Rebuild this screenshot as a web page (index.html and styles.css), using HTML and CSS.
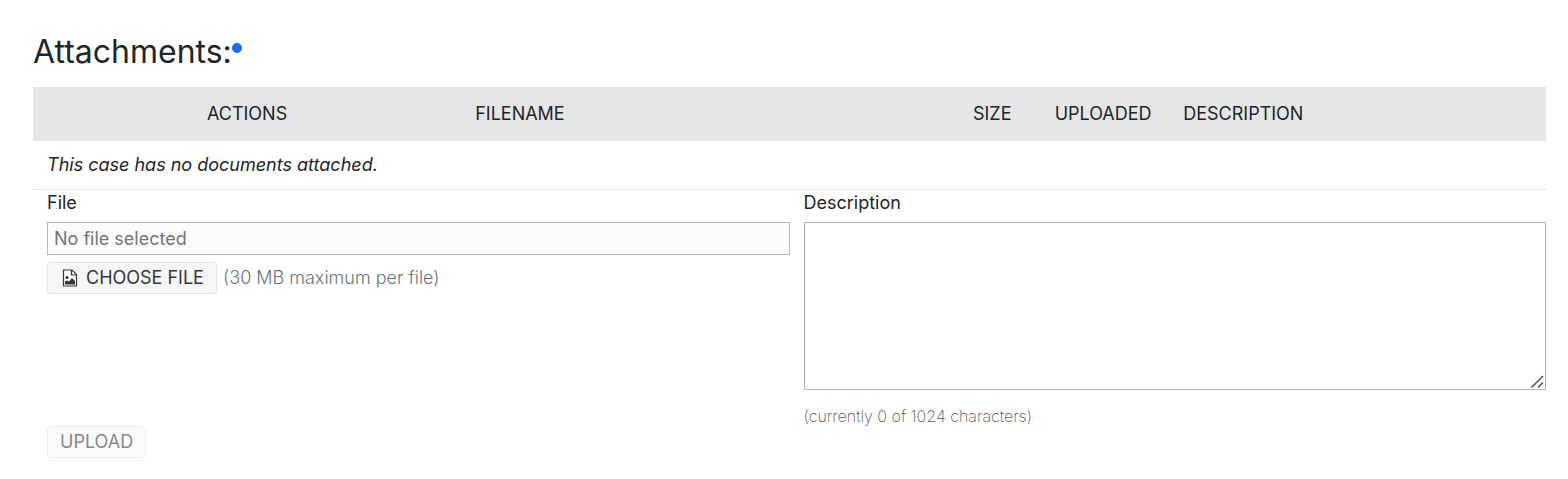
FILE: index.html
```html
<!DOCTYPE html>
<html lang="en">
<head>
  <meta charset="UTF-8">
  <title>Attachments</title>
  <link rel="stylesheet" href="styles.css">
</head>
<body>
  <div class="attachments">
    <h2 class="title">Attachments:<span class="dot"></span></h2>
    <table class="files">
      <thead>
        <tr>
          <th class="actions">Actions</th>
          <th class="filename">Filename</th>
          <th class="size">Size</th>
          <th class="uploaded">Uploaded</th>
          <th>Description</th>
        </tr>
      </thead>
      <tbody>
        <tr>
          <td colspan="5" class="empty">This case has no documents attached.</td>
        </tr>
      </tbody>
    </table>
    <form class="upload-form">
      <div class="column">
        <label for="filename">File</label>
        <div class="file-box">
          <input type="text" id="filename" class="field" placeholder="No file selected" readonly>
          <input type="file" class="file-input" aria-label="Choose files" multiple>
        </div>
        <div class="choose">
          <button type="button" class="btn">
            <svg class="icon" viewBox="0 0 16 18" width="16" height="18">
              <path d="M1.5 1h8.5l4.5 4.5V17h-13z" fill="#fff" stroke="#32373c" stroke-width="1.2"/>
              <path d="M9.5 1v5h5" fill="none" stroke="#32373c" stroke-width="1.2"/>
              <circle cx="5" cy="8.5" r="1.6" fill="#32373c"/>
              <path d="M3 15.5v-3l2-1.3 1.8 1.3L10 9l3 3v3.5z" fill="#32373c"/>
            </svg>
            Choose File
          </button>
          <span class="hint">(30 MB maximum per file)</span>
        </div>
      </div>
      <div class="column">
        <label for="description">Description</label>
        <textarea id="description" class="field" maxlength="1024"></textarea>
        <div class="counter">(currently 0 of 1024 characters)</div>
      </div>
      <button type="submit" class="btn upload" disabled>Upload</button>
    </form>
  </div>
</body>
</html>
```

FILE: styles.css
```css
* {
  box-sizing: border-box;
}
body {
  margin: 0;
  background: #fff;
  color: #212529;
  font: 18px/24px Inter, sans-serif;
}
.attachments {
  padding: 33px 22px 20px 33px;
}
.title {
  display: flex;
  margin: 0 0 16px;
  font-size: 32px;
  font-weight: 400;
  line-height: 38px;
}
.title .dot {
  width: 10px;
  height: 10px;
  margin-top: 10px;
  border-radius: 50%;
  background: #1b6ef3;
}
.files {
  width: 100%;
  table-layout: fixed;
  border-collapse: collapse;
}
.files th {
  height: 54px;
  padding: 0 14px;
  background: #e5e6e8;
  font-weight: 400;
  text-align: left;
  text-transform: uppercase;
}
.files .actions {
  width: 28.3%;
  text-align: center;
}
.files .filename {
  width: 32.9%;
}
.files .size {
  width: 5.4%;
}
.files .uploaded {
  width: 8.5%;
}
.files .empty {
  height: 48px;
  padding: 0 14px;
  border-bottom: 1px solid #e2e4ec;
  font-style: italic;
}
.upload-form {
  display: grid;
  grid-template-columns: 1fr 1fr;
  column-gap: 14px;
  padding: 1px 0 0 14px;
}
.column label {
  display: block;
  margin-bottom: 7px;
}
.field {
  display: block;
  width: 100%;
  border: 1px solid #b5b5b5;
  border-radius: 0;
  outline: none;
  padding: 0 6px;
  background: #fff;
  color: #212529;
  font: inherit;
}
input.field {
  height: 33px;
  background: #fcfcfc;
}
.field::placeholder {
  color: #757575;
}
textarea.field {
  height: 168px;
  padding: 6px;
  resize: both;
}
textarea::-webkit-resizer {
  background: url("data:image/svg+xml,%3Csvg xmlns='http://www.w3.org/2000/svg' viewBox='0 0 15 15'%3E%3Cpath d='M1.5 13.5l11.5-11.5M8 13.5l5-5' stroke='%23555' stroke-width='1.6'/%3E%3C/svg%3E") no-repeat;
}
/* real picker lies over the text box */
.file-box {
  position: relative;
}
.file-input {
  position: absolute;
  top: 0;
  left: 0;
  width: 100%;
  height: 100%;
  opacity: 0.01;
  font: inherit;
}
.choose {
  display: flex;
  align-items: center;
  gap: 6px;
  margin-top: 7px;
}
.btn {
  display: flex;
  align-items: center;
  height: 32px;
  padding: 0 12px;
  border: 1px solid #e6e6e6;
  border-radius: 3px;
  background: #f6f6f6;
  color: #32373c;
  font: inherit;
  text-transform: uppercase;
}
.btn .icon {
  margin: 0 8px 0 2px;
}
.hint {
  color: #6c757d;
  font-weight: 300;
}
.counter {
  margin-top: 16px;
  color: #555;
  font-size: 16px;
  font-weight: 200;
  line-height: 20px;
}
.upload {
  justify-self: start;
  border-color: #f0f0f0;
  background: #fafafa;
  color: #86888d;
}
```
